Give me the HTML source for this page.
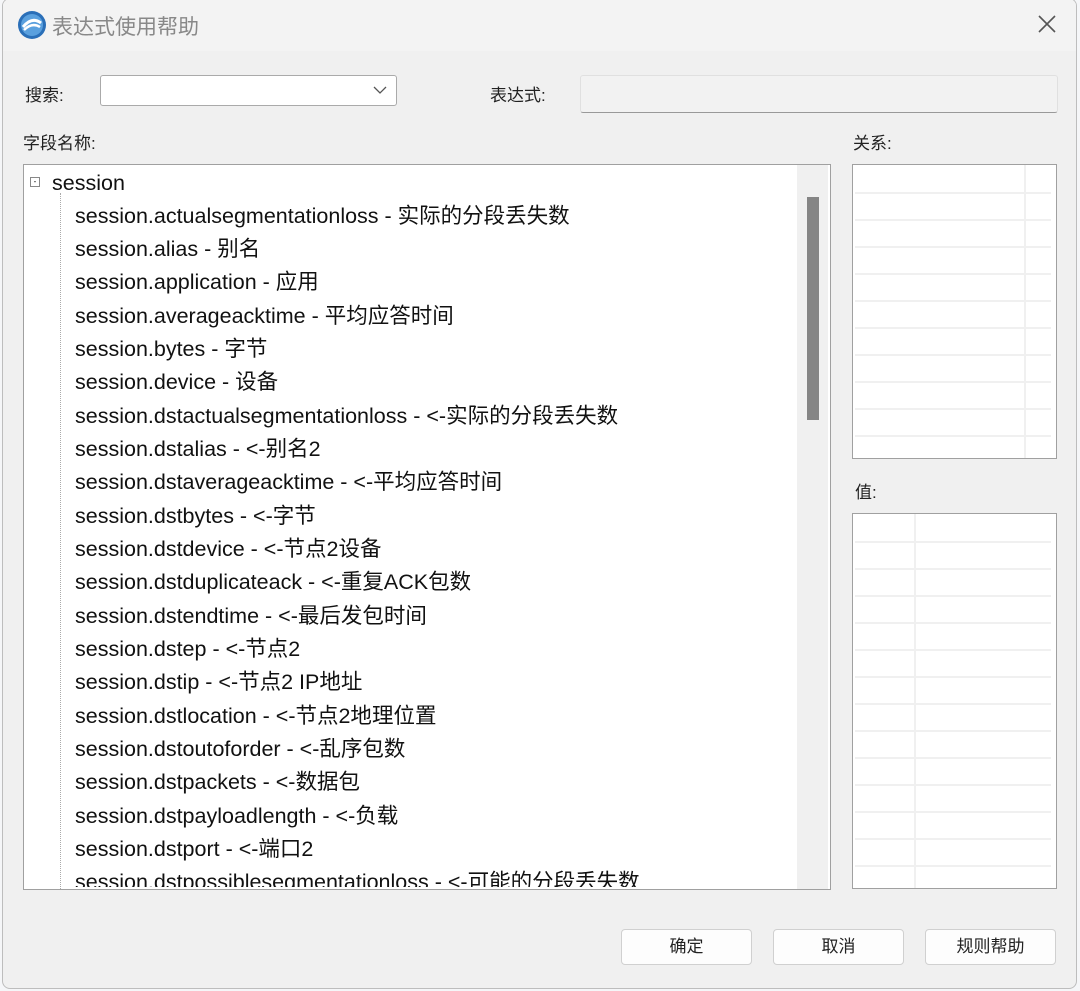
<!DOCTYPE html><html><head><meta charset="utf-8"><style>
body{margin:0;width:1080px;height:991px;background:#f5f6f8;position:relative;overflow:hidden;font-family:"Liberation Sans","Noto Sans CJK SC",sans-serif;}
.win{position:absolute;left:2px;top:-2px;width:1073px;height:989px;background:#f0f0f0;border:1px solid #bdbdbd;border-radius:8px;overflow:hidden}
.tb{position:absolute;left:0;top:0;right:0;height:52px;background:#f3f3f3}
.a{position:absolute}
.lbl{font-size:17px;color:#222}
.box{position:absolute;background:#fff;border:1px solid #a0a0a0}
.it{position:absolute;left:51px;font-size:21.5px;color:#111;white-space:nowrap;line-height:24px}
.btn{position:absolute;top:930px;width:129px;height:34px;background:#fdfdfd;border:1px solid #d0d0d0;border-radius:4px;text-align:center;line-height:34px;font-size:17px;color:#222}
.hl{position:absolute;height:2px;background:#f0f0f0}
.vl{position:absolute;width:2px;background:#f0f0f0}
</style></head><body>
<div class="win">
<div class="tb"></div>
<svg class="a" style="left:14px;top:11px" width="30" height="30" viewBox="0 0 30 30"><circle cx="15" cy="15" r="14" fill="#2a6fb8"/><circle cx="15" cy="15" r="11" fill="#5aa0de"/><path d="M6 17 Q15 6 24 13" stroke="#fff" stroke-width="3" fill="none"/><path d="M7 20 Q15 12 23 17" stroke="#fff" stroke-width="2.5" fill="none"/></svg>
<div class="a" style="left:49px;top:12px;font-size:21px;color:#888">表达式使用帮助</div>
<svg class="a" style="left:1034px;top:15px" width="20" height="20"><path d="M2 2L18 18M18 2L2 18" stroke="#555" stroke-width="1.6"/></svg>
<div class="a lbl" style="left:22px;top:82px">搜索:</div>
<div class="box" style="left:97px;top:76px;width:295px;height:29px;border-color:#aaa;border-radius:3px"></div>
<svg class="a" style="left:370px;top:86px" width="14" height="10"><path d="M1 2L7 8L13 2" stroke="#555" stroke-width="1.3" fill="none"/></svg>
<div class="a lbl" style="left:487px;top:82px">表达式:</div>
<div class="a" style="left:577px;top:76px;width:476px;height:36px;background:#f2f2f2;border:1px solid #e0e0e0;border-bottom:1px solid #999;border-radius:3px"></div>
<div class="a lbl" style="left:20px;top:130px">字段名称:</div>
<div class="box" style="left:20px;top:165px;width:806px;height:724px;overflow:hidden">
<div class="a" style="left:773px;top:0;width:31px;height:724px;background:#f0f0f0"></div>
<div class="a" style="left:783px;top:32px;width:12px;height:223px;background:#858585"></div>
<div class="a" style="left:36px;top:28px;width:0;height:700px;border-left:1px dotted #aaa"></div>
<div class="a" style="left:6px;top:12px;width:8px;height:8px;border:1px solid #888;background:#fff;font-size:8px;line-height:7px;text-align:center">-</div>
<div class="it" style="left:28px;top:6px">session</div>
</div>
<div class="a" style="left:21px;top:166px;width:770px;height:722px;overflow:hidden">
<div class="it" style="top:39px">session.actualsegmentationloss - 实际的分段丢失数</div>
<div class="it" style="top:72px">session.alias - 别名</div>
<div class="it" style="top:105px">session.application - 应用</div>
<div class="it" style="top:139px">session.averageacktime - 平均应答时间</div>
<div class="it" style="top:172px">session.bytes - 字节</div>
<div class="it" style="top:205px">session.device - 设备</div>
<div class="it" style="top:239px">session.dstactualsegmentationloss - &lt;-实际的分段丢失数</div>
<div class="it" style="top:272px">session.dstalias - &lt;-别名2</div>
<div class="it" style="top:305px">session.dstaverageacktime - &lt;-平均应答时间</div>
<div class="it" style="top:339px">session.dstbytes - &lt;-字节</div>
<div class="it" style="top:372px">session.dstdevice - &lt;-节点2设备</div>
<div class="it" style="top:405px">session.dstduplicateack - &lt;-重复ACK包数</div>
<div class="it" style="top:439px">session.dstendtime - &lt;-最后发包时间</div>
<div class="it" style="top:472px">session.dstep - &lt;-节点2</div>
<div class="it" style="top:505px">session.dstip - &lt;-节点2 IP地址</div>
<div class="it" style="top:539px">session.dstlocation - &lt;-节点2地理位置</div>
<div class="it" style="top:572px">session.dstoutoforder - &lt;-乱序包数</div>
<div class="it" style="top:605px">session.dstpackets - &lt;-数据包</div>
<div class="it" style="top:639px">session.dstpayloadlength - &lt;-负载</div>
<div class="it" style="top:672px">session.dstport - &lt;-端口2</div>
<div class="it" style="top:705px">session.dstpossiblesegmentationloss - &lt;-可能的分段丢失数</div>
</div>
<div class="a lbl" style="left:850px;top:130px">关系:</div>
<div class="box" style="left:849px;top:165px;width:203px;height:293px;overflow:hidden">
<div class="vl" style="left:171px;top:0;height:293px"></div>
<div class="hl" style="left:2px;top:27px;width:196px"></div><div class="hl" style="left:2px;top:54px;width:196px"></div><div class="hl" style="left:2px;top:81px;width:196px"></div><div class="hl" style="left:2px;top:108px;width:196px"></div><div class="hl" style="left:2px;top:135px;width:196px"></div><div class="hl" style="left:2px;top:162px;width:196px"></div><div class="hl" style="left:2px;top:189px;width:196px"></div><div class="hl" style="left:2px;top:216px;width:196px"></div><div class="hl" style="left:2px;top:243px;width:196px"></div><div class="hl" style="left:2px;top:270px;width:196px"></div>
</div>
<div class="a lbl" style="left:852px;top:479px">值:</div>
<div class="box" style="left:849px;top:514px;width:203px;height:374px;overflow:hidden">
<div class="vl" style="left:61px;top:0;height:374px"></div>
<div class="hl" style="left:2px;top:27px;width:196px"></div><div class="hl" style="left:2px;top:54px;width:196px"></div><div class="hl" style="left:2px;top:81px;width:196px"></div><div class="hl" style="left:2px;top:108px;width:196px"></div><div class="hl" style="left:2px;top:135px;width:196px"></div><div class="hl" style="left:2px;top:162px;width:196px"></div><div class="hl" style="left:2px;top:189px;width:196px"></div><div class="hl" style="left:2px;top:216px;width:196px"></div><div class="hl" style="left:2px;top:243px;width:196px"></div><div class="hl" style="left:2px;top:270px;width:196px"></div><div class="hl" style="left:2px;top:297px;width:196px"></div><div class="hl" style="left:2px;top:324px;width:196px"></div><div class="hl" style="left:2px;top:351px;width:196px"></div>
</div>
<div class="btn" style="left:618px">确定</div>
<div class="btn" style="left:770px">取消</div>
<div class="btn" style="left:922px">规则帮助</div>
</div>
</body></html>
